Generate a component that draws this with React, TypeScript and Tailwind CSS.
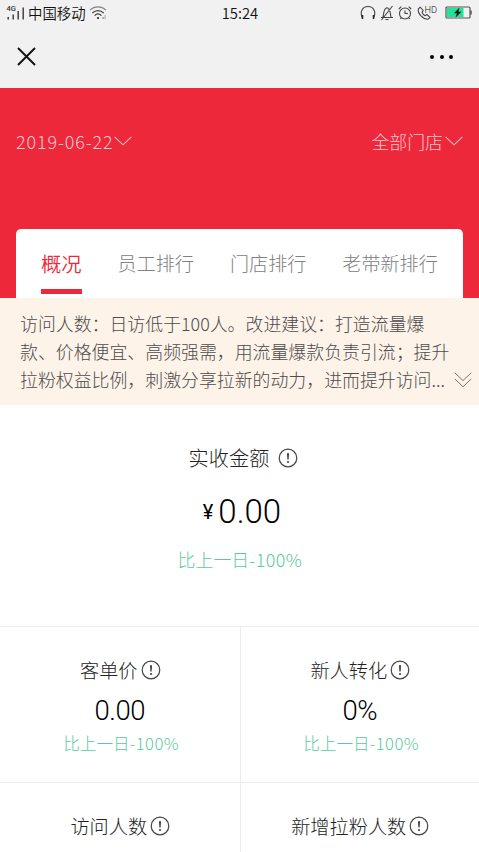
import { ReactNode } from "react";
import clsx from "clsx";

type Metric = {
  title: string;
  value?: string;
  diff?: string;
};

const TABS = ["概况", "员工排行", "门店排行", "老带新排行"];

const NOTICE_LINES = [
  "访问人数：日访低于100人。改进建议：打造流量爆",
  "款、价格便宜、高频强需，用流量爆款负责引流；提升",
  "拉粉权益比例，刺激分享拉新的动力，进而提升访问...",
];

const METRICS: Metric[] = [
  { title: "客单价", value: "0.00", diff: "-100%" },
  { title: "新人转化", value: "0%", diff: "-100%" },
  { title: "访问人数" },
  { title: "新增拉粉人数" },
];

const InfoIcon = () => (
  <svg width="20" height="20" viewBox="0 0 20 20" fill="none" className="shrink-0">
    <circle cx="10" cy="10" r="8.8" stroke="#444" strokeWidth="1.2" />
    <path d="M9 5.2h2l-.4 6.4H9.4z" fill="#333" />
    <circle cx="10" cy="14" r="1" fill="#333" />
  </svg>
);

const ChevronDown = () => (
  <svg width="18" height="10" viewBox="0 0 18 10" fill="none" className="shrink-0">
    <path d="M.6.8 9 8.8 17.4.8" stroke="#fbbcc3" strokeWidth="1.1" />
  </svg>
);

const StatusBar = () => (
  <div className="flex h-[25px] items-center justify-between px-[6px]">
    <div className="flex w-[200px] items-center">
      <svg width="20" height="16" viewBox="0 0 20 16" fill="none">
        <text x="0.5" y="6.2" fontSize="7.5" fontFamily="Roboto" fontWeight="500" fill="#333">
          4G
        </text>
        <path d="M2.2 12v2.5" stroke="#333" strokeWidth="1.5" />
        <path d="M7.2 9.5v5M12.2 6v8.5M17.2 2.5v12" stroke="#444" strokeWidth="1.5" />
      </svg>
      <span className="ml-[2px] text-[14.4px] leading-[25px] font-[350]">中国移动</span>
      <svg width="18" height="16" viewBox="0 0 18 16" fill="none" className="ml-[3px]">
        <path d="M1 5.2C5.5.8 12.5.8 17 5.2" stroke="#888" strokeWidth="1.1" />
        <path d="M3.3 8C6.7 4.8 11.3 4.8 14.7 8" stroke="#444" strokeWidth="1.2" />
        <path d="M5.6 10.6C7.6 8.7 10.4 8.7 12.4 10.6" stroke="#333" strokeWidth="1.2" />
        <circle cx="9" cy="13" r="1.1" fill="#222" />
        <path d="M13.4 13h1.5M15.5 11h1M15.5 13h1" stroke="#555" strokeWidth="1" />
      </svg>
    </div>
    <span className="pl-px text-[14.8px] leading-[25px] font-[350]">15:24</span>
    <div className="flex w-[200px] items-center justify-end">
      <svg width="16" height="16" viewBox="0 0 16 16" fill="none" stroke="#444" strokeWidth="1.1">
        <path d="M2.5 13C-.5 7.5 2 1.5 8 1.5S16.5 7.5 13.5 13" />
        <path d="M2.500 10v4M13.500 10v4" stroke="#222" strokeWidth="1.500" />
      </svg>
      <svg width="14" height="16" viewBox="0 0 14 16" fill="none" stroke="#444" strokeWidth="1.100" className="ml-[4px]">
        <path d="M1 12.500h12M2.800 12.500C4.300 9 2.800 4 7 2.700c4.200 1.300 2.700 6.300 4.200 9.800M5.500 14.500h3M12.500 1 1.500 15" />
      </svg>
      <svg width="14" height="16" viewBox="0 0 14 16" fill="none" stroke="#444" strokeWidth="1.100" className="ml-[4px]">
        <circle cx="7" cy="8.500" r="5.500" />
        <path d="M7 5.500v3h3M.8 4l2.500-2.300M13.200 4l-2.500-2.300M3.500 12.500 2.300 14M10.500 12.500l1.200 1.500" />
      </svg>
      <svg width="21" height="16" viewBox="0 0 21 16" fill="none" stroke="#444" strokeWidth="1.100" className="ml-[5px]">
        <path d="M3.200 2.200 1.300 4C.5 8.500 6 14.500 11 14.300l2-1.900-3-2.900-1.800 1.200C6.800 10 5.600 8.700 5 7.200L6.200 5.500z" />
        <text x="7.500" y="8" fontSize="9.200" fontFamily="Roboto" stroke="none" fill="#111">
          HD
        </text>
      </svg>
      <svg width="28" height="14" viewBox="0 0 28 14" fill="none" className="ml-[7px]">
        <rect x="1" y="1" width="24" height="11" rx="1" stroke="#555" strokeWidth="1.200" />
        <path d="M2 2h16.500v9H2z" fill="#20e29b" />
        <path d="M26 4.500v4" stroke="#555" strokeWidth="1.500" />
        <path d="M14.500 1.500 9 7.300h3l-1.500 4.200 6-5.800h-3z" fill="#111" />
      </svg>
    </div>
  </div>
);

const TitleBar = () => (
  <div className="flex h-[63px] items-center justify-between pl-[17px] pr-[26px]">
    <svg width="19" height="19" viewBox="0 0 19 19" fill="none" className="-mt-px">
      <path d="M1 1l17 17M18 1 1 18" stroke="#111" strokeWidth="1.900" />
    </svg>
    <div className="flex gap-[5.400px]">
      <span className="size-[4px] rounded-full bg-black" />
      <span className="size-[4px] rounded-full bg-black" />
      <span className="size-[4px] rounded-full bg-black" />
    </div>
  </div>
);

const Diff = ({ className, children }: { className?: string; children: ReactNode }) => (
  <p className={clsx("whitespace-nowrap text-[#5cc99c]", className)}>
    比上一日<span className="tracking-[0.5px]">{children}</span>
  </p>
);

const MetricCell = ({ title, value, diff }: Metric) => (
  <div className="flex h-[156px] flex-col items-center border-b border-[#ececec] pt-[29px] even:border-l">
    <div className="flex h-[28px] items-center gap-[3px] pl-px">
      <span className="text-[19.200px] leading-[28px] text-[#222]">{title}</span>
      <InfoIcon />
    </div>
    {value && (
      <p className="mt-[9px] h-[36px] font-['Roboto',sans-serif] text-[27.500px] leading-[36px] tracking-[-0.500px] text-black">
        {value}
      </p>
    )}
    {diff && <Diff className="mt-[2px] pl-[3px] text-[16.600px] leading-[24px]">{diff}</Diff>}
  </div>
);

const App = () => {
  return (
    <div className="h-[852px] w-[479px] overflow-hidden bg-white font-['Noto_Sans_CJK_SC',sans-serif] font-light text-[#111]">
      <header className="bg-[#f1f1f1]">
        <StatusBar />
        <TitleBar />
      </header>

      <section className="flex h-[210px] flex-col justify-between bg-[#ed283a] px-[16px] pt-[39px]">
        <div className="flex h-[28px] items-center justify-between text-[17.900px] text-[#fdc9ce]">
          <div className="flex items-center">
            <span className="tracking-[0.900px]">2019-06-22</span>
            <ChevronDown />
          </div>
          <div className="flex items-center gap-[2px]">
            <span>全部门店</span>
            <ChevronDown />
          </div>
        </div>

        <nav className="flex h-[69px] gap-[36px] rounded-t-[5px] bg-white pl-[25px]">
          {TABS.map((tab, i) => (
            <div
              key={tab}
              className={clsx(
                "flex flex-col whitespace-nowrap pt-[20px] leading-[28px]",
                i === 0 ? "text-[20.300px] font-[350] text-[#ed283a]" : "text-[19.100px] text-[#808080]"
              )}
            >
              {tab}
              {i === 0 && <span className="mt-[12px] h-[5px] bg-[#ed283a]" />}
            </div>
          ))}
        </nav>
      </section>

      <section className="flex h-[107px] items-end justify-between bg-[#fef3e9] pb-[12px] pl-[20px] pr-[7px]">
        <div className="text-[17.900px] leading-[28px] text-[#4c4c4c]">
          {NOTICE_LINES.map((line) => (
            <p key={line} className="whitespace-nowrap">
              {line}
            </p>
          ))}
        </div>
        <svg width="18" height="16" viewBox="0 0 18 16" fill="none" stroke="#777" className="mb-[5px]">
          <path d="M.8.8 9 8.500 17.200.8M.8 7 9 14.700 17.200 7" />
        </svg>
      </section>

      <section className="flex h-[221px] flex-col items-center pt-[38px]">
        <div className="flex h-[30px] items-center gap-[9px] pl-[8px]">
          <span className="text-[20.200px] leading-[30px] text-[#222]">实收金额</span>
          <InfoIcon />
        </div>
        <div className="mt-[17px] flex h-[44px] items-center gap-[5px] pl-[5px] font-['Roboto',sans-serif] text-black">
          <span className="text-[20px] leading-[44px] font-normal">¥</span>
          <span className="text-[33px] leading-[44px]">0.00</span>
        </div>
        <Diff className="mt-[12px] pl-px text-[17.900px] leading-[26px]">-100%</Diff>
      </section>

      <section className="grid grid-cols-2 border-t border-[#ececec]">
        {METRICS.map((metric) => (
          <MetricCell key={metric.title} {...metric} />
        ))}
      </section>
    </div>
  );
};

export default App;
